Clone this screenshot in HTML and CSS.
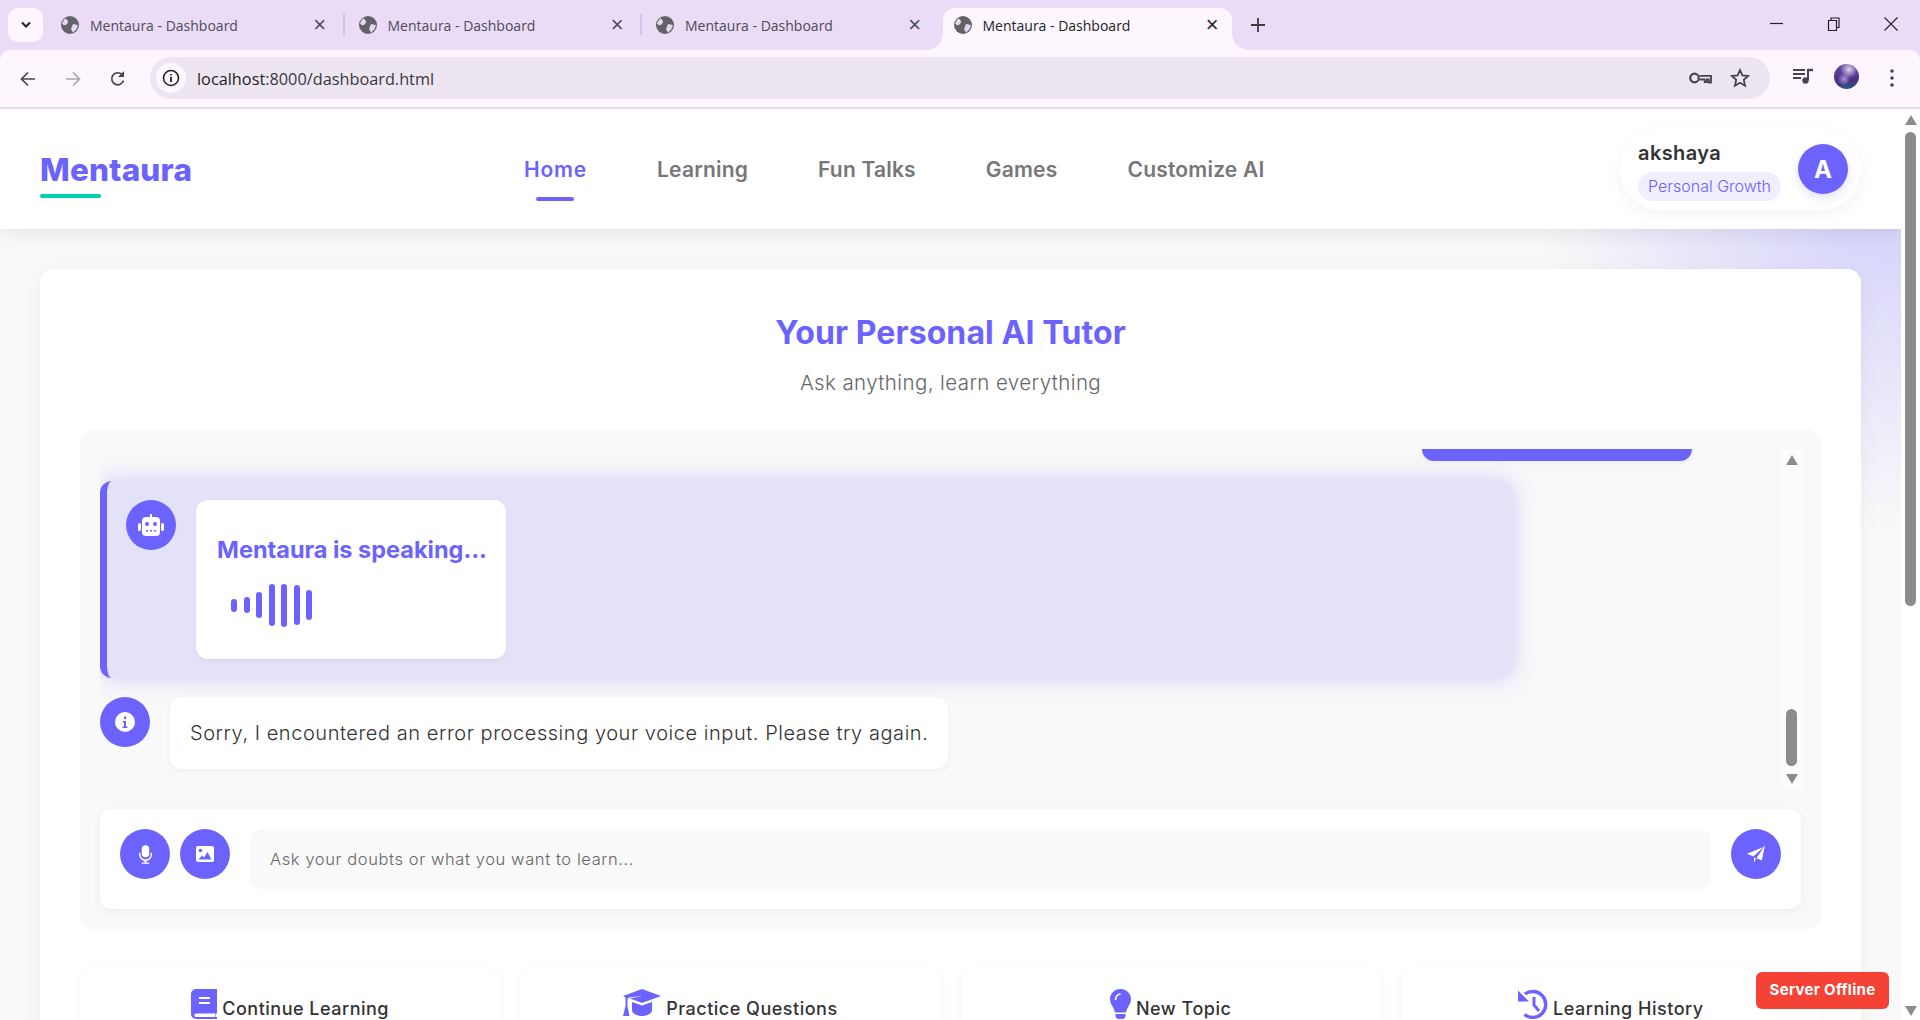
FILE: index.html

```html
<!DOCTYPE html>
<html>
	<head>
		<meta charset="UTF-8">
		<title>Mentaura - Dashboard</title>
		<link rel="stylesheet" href="styles.css">
	</head>
	<body>
		<svg class="sprite" width="0" height="0">
			<symbol id="globe" viewBox="0 0 18 18">
				<circle cx="9" cy="9" r="9" fill="#636268"/>
				<path d="M4.500 2.200Q9 5.500 5.500 8.500 3 10.500 1 7.500 2 4 4.500 2.200zM12 8l4.800 1q-.3 4.500-5 7.500L10 13z" fill="#e4d8ee"/>
			</symbol>
		</svg>

		<!-- browser frame -->
		<div class="tabstrip">
			<div class="tab-menu">
				<svg width="12" height="8" viewBox="0 0 12 8"><path d="M2 1.500l4 4 4-4" fill="none" stroke="#222" stroke-width="2"/></svg>
			</div>
			<div class="tabs">
				<div class="tab"><svg class="globe" width="18" height="18"><use href="#globe"/></svg><span>Mentaura - Dashboard</span><b>×</b></div>
				<div class="tab"><svg class="globe" width="18" height="18"><use href="#globe"/></svg><span>Mentaura - Dashboard</span><b>×</b></div>
				<div class="tab"><svg class="globe" width="18" height="18"><use href="#globe"/></svg><span>Mentaura - Dashboard</span><b>×</b></div>
				<div class="tab active"><svg class="globe" width="18" height="18"><use href="#globe"/></svg><span>Mentaura - Dashboard</span><b>×</b></div>
			</div>
			<svg class="new-tab" width="14" height="14" viewBox="0 0 14 14"><path d="M7 0v14M0 7h14" stroke="#3c3a42" stroke-width="1.800"/></svg>
			<div class="window-btns">
				<svg width="14" height="14" viewBox="0 0 14 14"><path d="M0 6.500h13" stroke="#222" stroke-width="1.200"/></svg>
				<svg width="14" height="14" viewBox="0 0 14 14"><path d="M1.500 3.500h8v10h-8zM4 3.500V1h8v9.500h-2.500" fill="none" stroke="#222" stroke-width="1.200"/></svg>
				<svg width="14" height="14" viewBox="0 0 14 14"><path d="M.5.500l13 13M13.500.500l-13 13" stroke="#222" stroke-width="1.100"/></svg>
			</div>
		</div>
		<div class="toolbar">
			<svg class="tool-icon" width="16" height="16" viewBox="0 0 16 16"><path d="M15 8H2M8 1.500L1.500 8 8 14.500" fill="none" stroke="#48444e" stroke-width="1.700"/></svg>
			<svg class="tool-icon" width="16" height="16" viewBox="0 0 16 16"><path d="M1 8h13M8 1.500L14.500 8 8 14.500" fill="none" stroke="#aaa6ae" stroke-width="1.700"/></svg>
			<svg class="tool-icon" width="16" height="16" viewBox="0 0 16 16"><path d="M13.500 9.500A6 6 0 1 1 12 3.500" fill="none" stroke="#48444e" stroke-width="1.700"/><path d="M14 0v6H8z" fill="#48444e"/></svg>
			<div class="address">
				<div class="site-info">
					<svg width="18" height="18" viewBox="0 0 18 18"><circle cx="9" cy="9" r="7.500" fill="none" stroke="#222" stroke-width="1.600"/><path d="M9 8v5M9 5v1.600" stroke="#222" stroke-width="1.800"/></svg>
				</div>
				<span class="url">localhost<i>:8000/dashboard.html</i></span>
				<svg class="key" width="23" height="14" viewBox="0 0 23 14"><circle cx="5.500" cy="7" r="4.300" fill="none" stroke="#48444e" stroke-width="2.200"/><path d="M10.500 4.800H22v6.700h-2.200V8.500h-1.900v2.500h-2.200V8.500h-5.200" fill="none" stroke="#48444e" stroke-width="1.800"/></svg>
				<svg class="star" width="20" height="20" viewBox="0 0 20 20"><path d="M10 2l2.400 5.400 5.800.6-4.400 3.900 1.300 5.800L10 14.700l-5.100 3 1.300-5.800L1.800 8l5.800-.6z" fill="none" stroke="#48444e" stroke-width="1.800"/></svg>
			</div>
			<svg class="queue" width="20" height="16" viewBox="0 0 20 16"><path d="M0 2h12M0 6h12M0 10h8" stroke="#48444e" stroke-width="2"/><path d="M15 2h5" stroke="#48444e" stroke-width="2.400"/><path d="M15 1v11" stroke="#48444e" stroke-width="2"/><circle cx="12.500" cy="12.500" r="3.200" fill="#48444e"/></svg>
			<div class="profile"></div>
			<svg class="dots" width="4" height="18" viewBox="0 0 4 18"><circle cx="2" cy="2" r="1.800" fill="#48444e"/><circle cx="2" cy="9" r="1.800" fill="#48444e"/><circle cx="2" cy="16" r="1.800" fill="#48444e"/></svg>
		</div>

		<div class="viewport">
			<div class="page">
				<header class="header">
					<div class="logo">Mentaura</div>
					<nav class="nav">
						<a class="current">Home</a>
						<a>Learning</a>
						<a>Fun Talks</a>
						<a>Games</a>
						<a>Customize AI</a>
					</nav>
					<div class="user">
						<div class="user-info">
							<div class="user-name">akshaya</div>
							<div class="user-tag">Personal Growth</div>
						</div>
						<div class="avatar user-avatar">A</div>
					</div>
				</header>

				<main class="main">
					<section class="card">
						<h1 class="title">Your Personal AI Tutor</h1>
						<p class="subtitle">Ask anything, learn everything</p>

						<div class="chat">
							<div class="chat-body">
								<div class="messages">
									<div class="user-bubble"></div>
									<div class="speaking">
										<div class="avatar">
											<svg width="26" height="22" viewBox="0 0 26 22" fill="#fff"><path d="M12 0h2v3h-2z"/><rect x="4" y="3" width="18" height="19" rx="4"/><rect x="0" y="9" width="3" height="8" rx="1.500"/><rect x="23" y="9" width="3" height="8" rx="1.500"/><circle cx="9" cy="10" r="2" fill="#6c63ff"/><circle cx="17" cy="10" r="2" fill="#6c63ff"/><path d="M8 16h2v1.500H8zM12 16h2v1.500h-2zM16 16h2v1.500h-2z" fill="#6c63ff"/></svg>
										</div>
										<div class="speak-card">
											<div class="speak-text">Mentaura is speaking...</div>
											<div class="wave"><i></i><i></i><i></i><i></i><i></i><i></i><i></i></div>
										</div>
									</div>
									<div class="reply">
										<div class="avatar">
											<svg width="20" height="20" viewBox="0 0 20 20"><circle cx="10" cy="10" r="10" fill="#fff"/><path d="M8 9h3v5.500h1.500V16h-5v-1.500H9V10.500H8zM9 4.500h2.200v2.500H9z" fill="#6c63ff"/></svg>
										</div>
										<div class="reply-text">Sorry, I encountered an error processing your voice input. Please try again.</div>
									</div>
								</div>
								<div class="scrollbar chat-scroll">
									<span class="arrow up"></span>
									<span class="thumb"></span>
									<span class="arrow down"></span>
								</div>
							</div>

							<div class="composer">
								<button class="round-btn">
									<svg width="13" height="19" viewBox="0 0 14 20" fill="#fff"><rect x="3" y="0" width="8" height="13" rx="4"/><path d="M0 8h1.500v2a5.500 5.500 0 0 0 11 0V8H14v2a7 7 0 0 1-6 6.900V18.500h3V20H3v-1.500h3v-1.600A7 7 0 0 1 0 10z"/></svg>
								</button>
								<button class="round-btn">
									<svg width="18" height="16" viewBox="0 0 18 16"><rect width="18" height="16" rx="2" fill="#fff"/><circle cx="4.500" cy="4.500" r="1.800" fill="#6c63ff"/><path d="M2.500 13.500l3.500-4 2 2 3.500-5.500 4 7.500z" fill="#6c63ff"/></svg>
								</button>
								<div class="prompt">Ask your doubts or what you want to learn...</div>
								<button class="round-btn">
									<svg width="18" height="18" viewBox="0 0 18 18" fill="#fff"><path d="M18 0L14.800 15.500 9.500 13.200 18 0zM16.500 2L6.500 11.500 0 8.700z"/><path d="M7 12.500l2 1L7 18z"/></svg>
								</button>
							</div>
						</div>

						<div class="features">
							<div class="feature">
								<svg width="26" height="30" viewBox="0 0 26 30"><path d="M5 0h21v23.500a2 2 0 0 1-1 1.700V28h1v2H5a5 5 0 0 1-5-5V5a5 5 0 0 1 5-5z" fill="#6c63ff"/><path d="M8 8h11v2H8zM8 13h11v2H8zM5 24.500h19.500V28H5a1.750 1.750 0 0 1 0-3.500z" fill="#fff"/></svg>
								<span>Continue Learning</span>
							</div>
							<div class="feature">
								<svg width="38" height="27" viewBox="0 0 38 27" fill="#6c63ff"><path d="M19 0l19 7-19 7L7 9.500 19 7 6 8.500 4.500 10 4.500 17 6.500 27H0l2.500-10V8.500L0 7z"/><path d="M9 13l10 3.500L29 13v8c0 3.500-5 6-10 6s-10-2.500-10-6z"/></svg>
								<span>Practice Questions</span>
							</div>
							<div class="feature">
								<svg width="21" height="30" viewBox="0 0 21 30"><path d="M10.500 0C4.500 0 0 4.500 0 10c0 5.500 4 8 5 13.500h11c1-5.500 5-8 5-13.500C21 4.500 16.500 0 10.500 0z" fill="#6c63ff"/><path d="M5.500 11c0-3.500 2-5.500 5-6" fill="none" stroke="#fff" stroke-width="1.600"/><path d="M5.500 25h10v1.500a3.500 3.500 0 0 1-3.500 3.500H9a3.500 3.500 0 0 1-3.500-3.500z" fill="#6c63ff"/></svg>
								<span>New Topic</span>
							</div>
							<div class="feature">
								<svg width="30" height="30" viewBox="0 0 30 30"><path d="M6.500 25.500A13 13 0 1 0 7 5" fill="none" stroke="#6c63ff" stroke-width="3.400"/><path d="M0 1.500v11h11z" fill="#6c63ff"/><path d="M16 8v8l5 6" fill="none" stroke="#6c63ff" stroke-width="3"/></svg>
								<span>Learning History</span>
							</div>
						</div>
					</section>
				</main>
			</div>
			<div class="scrollbar page-scroll">
				<span class="arrow up"></span>
				<span class="thumb"></span>
				<span class="arrow down"></span>
			</div>
		</div>

		<div class="server-status">Server Offline</div>
	</body>
</html>
```

FILE: styles.css

```css
* {
	margin: 0;
	padding: 0;
	box-sizing: border-box;
}
body {
	height: 1020px;
	overflow: hidden;
	background-color: #eadcf6;
	font-family: Inter, "Liberation Sans", sans-serif;
	color: #333;
}
.sprite {
	position: absolute;
}

/* browser frame */
.tabstrip {
	display: flex;
	height: 50px;
	align-items: flex-start;
}
.tab-menu {
	display: flex;
	width: 35px;
	height: 34px;
	margin: 8px 3px 0 8px;
	align-items: center;
	justify-content: center;
	background-color: #fdf6ff;
	border-radius: 10px;
}
.tabs {
	display: flex;
	margin-top: 8px;
}
.tab {
	position: relative;
	display: flex;
	width: 297.5px;
	height: 42px;
	padding: 0 17.500px 8px 15px;
	align-items: center;
	font-family: "Open Sans", sans-serif;
	font-size: 14px;
	color: #4f4a58;
}
.tab::after {
	content: "";
	position: absolute;
	right: -1px;
	top: 6px;
	width: 2px;
	height: 21px;
	background-color: #d8bdf5;
}
.tab:nth-child(3)::after {
	display: none;
}
.tab span {
	margin-left: 11px;
	position: relative;
}
.tab b {
	position: relative;
	margin-left: auto;
	font-family: "Liberation Sans", sans-serif;
	font-size: 22px;
	font-weight: normal;
	line-height: 22px;
}
.globe {
	position: relative;
	flex: none;
}
.tab.active {
	color: #222;
}
.tab.active::before {
	content: "";
	position: absolute;
	top: 0;
	bottom: 0;
	left: 4px;
	right: 4px;
	background-color: #fdf6ff;
	border-radius: 12px 12px 0 0;
}
/* the flared feet of the open tab */
.tab.active::after {
	left: -12px;
	right: -12px;
	top: auto;
	bottom: 0;
	width: auto;
	height: 16px;
	background: radial-gradient(circle at 0 0, transparent 15.500px, #fdf6ff 16px) left bottom / 16px 16px no-repeat,
		radial-gradient(circle at 100% 0, transparent 15.500px, #fdf6ff 16px) right bottom / 16px 16px no-repeat;
}
.new-tab {
	margin: 18px 0 0 15px;
}
.window-btns {
	display: flex;
	margin-left: auto;
	padding: 17px 22px 0 0;
	gap: 43px;
}
.toolbar {
	display: flex;
	height: 59px;
	padding: 8px 0 9px 20px;
	align-items: center;
	background-color: #fdf6ff;
	border-radius: 10px 10px 0 0;
	border-bottom: 2px solid #e4dbe8;
}
.tool-icon {
	margin: 2px 29px 0 0;
}
.tool-icon:nth-child(3) {
	margin-right: 24px;
}
.address {
	display: flex;
	width: 1620px;
	height: 42px;
	padding: 0 20px 0 6px;
	align-items: center;
	background-color: #ede6f0;
	border-radius: 21px;
}
.site-info {
	display: flex;
	width: 30px;
	height: 30px;
	align-items: center;
	justify-content: center;
	background-color: #fdf6ff;
	border-radius: 50%;
}
.url {
	margin: 1px 0 0 11px;
	font-family: "Open Sans", sans-serif;
	font-size: 16.300px;
	color: #1f1d24;
}
.url i {
	font-style: normal;
	color: #3a3740;
}
.key {
	margin-left: auto;
}
.star {
	margin-left: 18px;
}
.queue {
	margin: -4px 0 0 23px;
}
.profile {
	width: 25px;
	height: 25px;
	margin: -3px 0 0 21px;
	border-radius: 50%;
	background: radial-gradient(circle at 60% 22%, #ded4ec 0, rgba(222, 212, 236, 0) 35%),
		radial-gradient(circle at 40% 60%, #b08fd0 0, rgba(176, 143, 208, 0) 30%),
		linear-gradient(#6a4fa6, #4a2d86 65%, #2a5a7c);
}
.dots {
	margin-left: 31px;
}

/* page */
.viewport {
	display: flex;
	height: 911px;
	background-color: #fff;
}
.page {
	width: 1901px;
	height: 911px;
	overflow: hidden;
	background-color: #f9f9f9;
	background-image: radial-gradient(circle 370px at 1900px 51px, rgba(108, 99, 255, 0.3), rgba(108, 99, 255, 0));
}
.scrollbar {
	display: flex;
	flex-direction: column;
	width: 19px;
	align-items: center;
	background-color: #fff;
	padding: 6px 0 4px;
}
.arrow {
	width: 0;
	height: 0;
	border-left: 6.500px solid transparent;
	border-right: 6.500px solid transparent;
}
.arrow.up {
	border-bottom: 10px solid #8c8c8c;
}
.arrow.down {
	margin-top: auto;
	border-top: 10px solid #8c8c8c;
}
.thumb {
	width: 11px;
	background-color: #8c8c8c;
	border-radius: 6px;
}
.page-scroll .thumb {
	height: 474px;
	margin-top: 7px;
}
.chat-scroll {
	padding-bottom: 5px;
	background-color: #fcfcfc;
}
.chat-scroll .thumb {
	height: 57px;
	margin-top: 244px;
}

/* header */
.header {
	position: relative;
	display: flex;
	height: 120px;
	padding: 0 40px;
	align-items: center;
	background-color: #fff;
	box-shadow: 0 4px 20px rgba(0, 0, 0, 0.08);
}
.logo {
	position: relative;
	width: 151px;
	font-size: 31.500px;
	font-weight: 800;
	color: #6c63ff;
	letter-spacing: 0.2px;
	white-space: nowrap;
}
.logo::after {
	content: "";
	position: absolute;
	left: 0;
	bottom: -9px;
	width: 61px;
	height: 4px;
	background-color: #00cfa8;
	border-radius: 2px;
}
.nav {
	display: flex;
	margin-left: 333px;
	gap: 70px;
}
.nav a {
	position: relative;
	font-size: 21px;
	font-weight: 600;
	color: #777;
	white-space: nowrap;
	letter-spacing: 0.2px;
}
.nav a.current {
	color: #6c63ff;
	letter-spacing: 0.8px;
}
.nav a.current::after {
	content: "";
	position: absolute;
	left: 50%;
	bottom: -19px;
	width: 38px;
	height: 4px;
	margin-left: -19px;
	background-color: #6c63ff;
	border-radius: 2px;
}
.user {
	display: flex;
	width: 241px;
	height: 81px;
	margin-left: auto;
	padding: 0 13px 0 18px;
	align-items: center;
	justify-content: space-between;
	background-color: #fff;
	border-radius: 40px;
	box-shadow: 0 4px 15px rgba(0, 0, 0, 0.05);
}
.user-info {
	padding-top: 4px;
}
.user-name {
	font-size: 20px;
	font-weight: 600;
	line-height: 24px;
	letter-spacing: 0.4px;
}
.user-tag {
	height: 29px;
	margin-top: 7px;
	padding: 0 10px;
	font-size: 16px;
	font-weight: 300;
	line-height: 29px;
	color: #6c63ff;
	background-color: #f0eeff;
	border-radius: 15px;
	white-space: nowrap;
}
.avatar {
	display: flex;
	flex: none;
	width: 50px;
	height: 50px;
	align-items: center;
	justify-content: center;
	background-color: #6c63ff;
	border-radius: 50%;
}
.user-avatar {
	font-size: 24px;
	font-weight: 700;
	color: #fff;
	box-shadow: 0 4px 10px rgba(108, 99, 255, 0.2);
}

/* tutor card */
.main {
	padding: 40px;
}
.card {
	padding: 40px;
	background-color: #fff;
	border-radius: 14px;
	box-shadow: 0 4px 20px rgba(0, 0, 0, 0.05);
}
.title {
	font-size: 32px;
	font-weight: 700;
	line-height: 48px;
	text-align: center;
	color: #6c63ff;
	letter-spacing: 0.1px;
	margin-bottom: 10px;
}
.subtitle {
	font-size: 20.500px;
	font-weight: 300;
	line-height: 32px;
	text-align: center;
	color: #666;
	margin-bottom: 31px;
	letter-spacing: 0.4px;
}
.chat {
	padding: 19px 20px 20px;
	background-color: #f9f9f9;
	border-radius: 12px;
}
.chat-body {
	display: flex;
	height: 340px;
}
.messages {
	flex: 1;
	overflow: hidden;
}
.user-bubble {
	width: 270px;
	height: 12px;
	margin: 0 90px 20px auto;
	background-color: #6c63ff;
	border-radius: 0 0 12px 12px;
	box-shadow: 0 2px 5px rgba(0, 0, 0, 0.05);
}
.speaking {
	display: flex;
	width: 1413px;
	height: 197px;
	padding: 19px;
	gap: 20px;
	background-color: #e4e2f8;
	border-left: 7px solid #6c63ff;
	border-radius: 12px;
	box-shadow: 0 0 25px rgba(108, 99, 255, 0.3);
}
.speak-card {
	width: 310px;
	height: 159px;
	padding: 30px 21px 0;
	background-color: #fff;
	border-radius: 12px;
	box-shadow: 0 2px 5px rgba(0, 0, 0, 0.05);
}
.speak-text {
	font-size: 23.500px;
	font-weight: 700;
	line-height: 40px;
	color: #6c63ff;
	white-space: nowrap;
}
.wave {
	display: flex;
	height: 50px;
	margin: 10px 0 0 14px;
	gap: 6.500px;
	align-items: center;
}
.wave i {
	width: 6px;
	background-color: #6c63ff;
	border-radius: 3px;
}
.wave i:nth-child(1) { height: 13px; }
.wave i:nth-child(2) { height: 16px; }
.wave i:nth-child(3) { height: 26px; }
.wave i:nth-child(4) { height: 42px; }
.wave i:nth-child(5) { height: 43px; }
.wave i:nth-child(6) { height: 40px; }
.wave i:nth-child(7) { height: 30px; }
.reply {
	display: flex;
	margin-top: 19px;
	align-items: flex-start;
	gap: 20px;
}
.reply-text {
	height: 72px;
	padding: 0 20px;
	font-size: 20px;
	font-weight: 300;
	line-height: 72px;
	letter-spacing: 0.55px;
	background-color: #fff;
	border-radius: 12px;
	box-shadow: 0 2px 5px rgba(0, 0, 0, 0.05);
	white-space: nowrap;
}
.composer {
	display: flex;
	height: 100px;
	margin-top: 20px;
	padding: 20px;
	gap: 10px;
	align-items: flex-start;
	background-color: #fff;
	border-radius: 12px;
	box-shadow: 0 2px 10px rgba(0, 0, 0, 0.05);
}
.round-btn {
	display: flex;
	flex: none;
	width: 50px;
	height: 50px;
	align-items: center;
	justify-content: center;
	border: none;
	background-color: #6c63ff;
	border-radius: 50%;
}
.prompt {
	flex: 1;
	height: 60px;
	margin: 0 10px;
	padding-left: 20px;
	font-size: 16.500px;
	font-weight: 300;
	line-height: 60px;
	letter-spacing: 0.6px;
	color: #666;
	background-color: #f9f9f9;
	border-radius: 12px;
}
.features {
	display: grid;
	grid-template-columns: repeat(4, 1fr);
	gap: 20px;
	margin-top: 40px;
}
.feature {
	display: flex;
	height: 150px;
	padding-top: 20px;
	align-items: flex-start;
	justify-content: center;
	gap: 5px;
	background-color: #fff;
	border-radius: 12px;
	box-shadow: 0 2px 10px rgba(0, 0, 0, 0.05);
}
.feature span {
	margin-top: 8px;
	font-size: 18px;
	font-weight: 500;
	line-height: 24px;
	letter-spacing: 0.5px;
}
.server-status {
	position: fixed;
	right: 31px;
	bottom: 11px;
	width: 133px;
	height: 37px;
	font-size: 15px;
	font-weight: 700;
	line-height: 35px;
	letter-spacing: 0.3px;
	text-align: center;
	color: #fff;
	background-color: #f44336;
	border-radius: 6px;
}
```
